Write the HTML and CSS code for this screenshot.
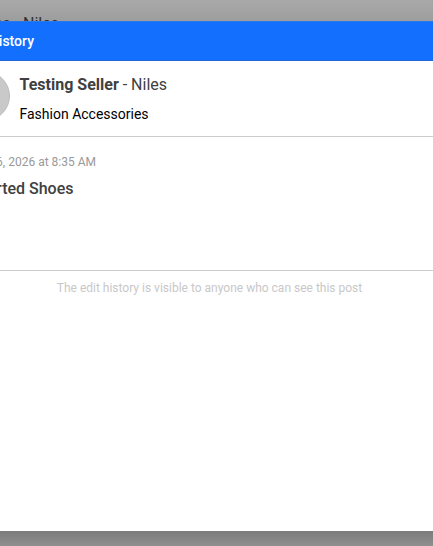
FILE: index.html
```html
<!DOCTYPE html>
<html lang="en">
<head>
<meta charset="utf-8">
<title>History</title>
<link rel="stylesheet" href="styles.css">
</head>
<body>
<div class="backdrop"><span>es - Niles</span></div>
<main class="dialog">
  <header class="titlebar"><span class="title">istory</span></header>
  <section class="seller">
    <div class="avatar"></div>
    <div class="info">
      <div class="name"><b>Testing Seller</b> - Niles</div>
      <div class="category">Fashion Accessories</div>
    </div>
  </section>
  <section class="entry">
    <div class="date">6, 2026 at 8:35 AM</div>
    <div class="post-title">rted Shoes</div>
  </section>
  <footer class="note">The edit history is visible to anyone who can see this post</footer>
</main>
<div class="bottom-shade"></div>
</body>
</html>
```
FILE: styles.css
```css
* { box-sizing: border-box; }
body {
  margin: 0;
  height: 546px;
  overflow: hidden;
  display: flex;
  flex-direction: column;
  font-family: Roboto, sans-serif;
  color: #404040;
  white-space: nowrap;
}
.backdrop {
  height: 21px;
  flex: none;
  overflow: hidden;
  background: linear-gradient(#a9a9a9, #9d9d9d);
  display: flex;
  justify-content: flex-end;
  width: 433px;
  padding: 15px 374px 0 0;
  font-size: 16px;
  line-height: 18px;
  color: #303030;
}
.dialog { height: 510px; flex: none; background: #fff; }
.titlebar {
  height: 40px;
  background: #1370ff;
  border-top: 1px solid #2877ec;
  border-bottom: 1px solid #2068d8;
  display: flex;
  align-items: center;
  color: #fff;
}
.title {
  display: flex;
  justify-content: flex-end;
  width: 34px;
  font-size: 14px;
  font-weight: 500;
}
.seller {
  height: 76px;
  display: flex;
  align-items: flex-start;
  gap: 9.5px;
  padding-top: 10px;
  border-bottom: 1px solid #ccc;
}
.avatar {
  width: 50px;
  height: 50px;
  margin-left: -40px;
  flex: none;
  border-radius: 50%;
  background: #c9c9c9;
  border: 1px solid #bdbdbd;
}
.name { font-size: 16px; line-height: 20px; padding-top: 4px; }
.name b { font-weight: 700; }
.category { color: #000; font-size: 14px; line-height: 20px; margin-top: 9px; }
.entry {
  height: 134px;
  padding-top: 17px;
  border-bottom: 1px solid #ccc;
}
.date, .post-title { display: flex; justify-content: flex-end; }
.date { width: 96px; font-size: 12px; line-height: 16px; color: #999; }
.post-title { width: 73.5px; margin-top: 9px; font-size: 16px; line-height: 20px; font-weight: 500; }
.note {
  padding: 9px 14px 0 0;
  text-align: center;
  font-size: 12px;
  line-height: 16px;
  color: #c8c8c8;
}
.bottom-shade { height: 15px; background: linear-gradient(#7b7b7b, #8f8f8f); }
```
